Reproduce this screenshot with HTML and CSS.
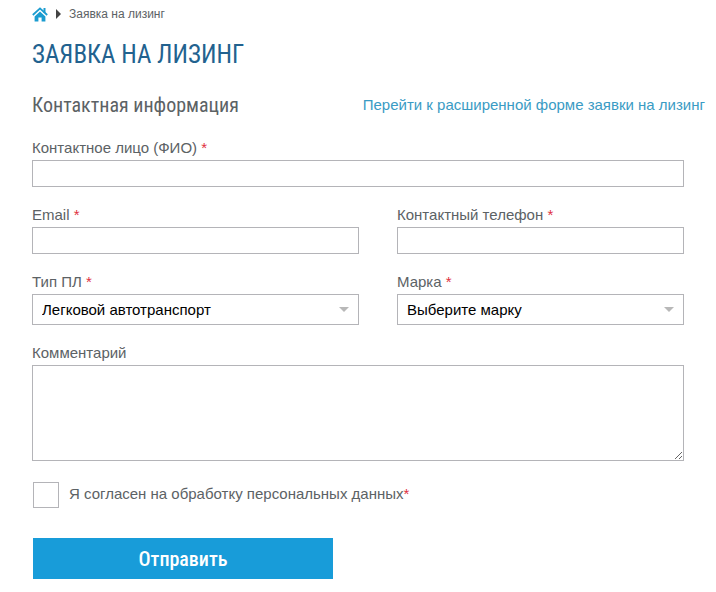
FILE: index.html
```html
<!DOCTYPE html>
<html lang="ru">
<head>
    <meta charset="UTF-8">
    <meta name="viewport" content="width=device-width, initial-scale=1.0">
    <title>Заявка на лизинг</title>
    <link rel="stylesheet" href="styles.css">
</head>
<body>
    <div class="container">
        <nav class="breadcrumbs">
            <a href="#" class="home" aria-label="Главная">
                <svg width="16" height="15" viewBox="0 0 16 15">
                    <path d="M11.5 1h2v5h-2z" fill="#1b9cd0"/>
                    <path d="M.8 8L8 1.4 15.2 8" fill="none" stroke="#1b9cd0" stroke-width="1.8"/>
                    <path d="M8 4.4l5.4 5V14.5H9.6v-4H6.4v4H2.6V9.4z" fill="#1b9cd0"/>
                </svg>
            </a>
            <svg class="separator" width="5" height="10" viewBox="0 0 5 10">
                <path d="M0 0l5 5-5 5z" fill="#444"/>
            </svg>
            <span>Заявка на лизинг</span>
        </nav>

        <h1>ЗАЯВКА НА ЛИЗИНГ</h1>

        <div class="form-header">
            <h2>Контактная информация</h2>
            <a href="#">Перейти к расширенной форме заявки на лизинг</a>
        </div>

        <form class="form">
            <div class="form-group">
                <label for="fio">Контактное лицо (ФИО) <span class="required">*</span></label>
                <input type="text" id="fio">
            </div>

            <div class="form-row">
                <div class="form-group">
                    <label for="email">Email <span class="required">*</span></label>
                    <input type="text" id="email">
                </div>
                <div class="form-group">
                    <label for="phone">Контактный телефон <span class="required">*</span></label>
                    <input type="text" id="phone">
                </div>
            </div>

            <div class="form-row">
                <div class="form-group">
                    <label for="type">Тип ПЛ <span class="required">*</span></label>
                    <div class="select">
                        <select id="type">
                            <option>Легковой автотранспорт</option>
                        </select>
                    </div>
                </div>
                <div class="form-group">
                    <label for="brand">Марка <span class="required">*</span></label>
                    <div class="select">
                        <select id="brand">
                            <option>Выберите марку</option>
                        </select>
                    </div>
                </div>
            </div>

            <div class="form-group">
                <label for="comment">Комментарий</label>
                <textarea id="comment"></textarea>
            </div>

            <div class="agree">
                <input type="checkbox" id="agree">
                <label for="agree">Я согласен на обработку персональных данных<span class="required">*</span></label>
            </div>

            <button type="submit">Отправить</button>
        </form>
    </div>
</body>
</html>
```
FILE: styles.css
```css
* {
    margin: 0;
    padding: 0;
    box-sizing: border-box;
}

body {
    background-color: #fff;
    color: #5c6265;
    font-family: "Liberation Sans", Arial, sans-serif;
    font-size: 15px;
    line-height: 20px;
}

a {
    color: #3a9bc4;
    text-decoration: none;
}

.container {
    padding: 4px 11px 12px 32px;
}

/* Хлебные крошки */
.breadcrumbs {
    display: flex;
    align-items: center;
    font-size: 12px;
}

.home,
.separator {
    display: block;
    margin-right: 8px;
}

.home svg {
    display: block;
}

/* Заголовки */
h1,
h2,
button {
    font-family: "Roboto Condensed", "Liberation Sans Narrow", "Arial Narrow", "Liberation Sans", sans-serif;
    font-weight: normal;
}

h1 {
    margin-top: 14px;
    color: #22628f;
    font-size: 25px;
    line-height: 34px;
}

.form-header {
    display: flex;
    justify-content: space-between;
    align-items: center;
    margin: 20px 0;
}

h2 {
    font-size: 20px;
    line-height: 26px;
}

/* Форма */
.form {
    margin-right: 21px;
}

.form-group {
    margin-bottom: 18px;
}

.form-group label {
    display: block;
    margin-bottom: 2px;
}

.form-row {
    display: grid;
    grid-template-columns: 327fr 287fr;
    gap: 38px;
}

.required {
    color: #e03040;
}

input,
select,
textarea {
    display: block;
    width: 100%;
    border: 1px solid #b4b4b8;
    border-radius: 0;
    background-color: #fff;
    color: #000;
    font: inherit;
}

input[type="text"] {
    height: 27px;
    padding: 0 9px;
}

.select {
    position: relative;
}

.select::after {
    content: "";
    position: absolute;
    top: 13px;
    right: 10px;
    border: 5px solid transparent;
    border-top-color: #b8b8b8;
    border-bottom: 0;
    pointer-events: none;
}

select {
    height: 31px;
    padding: 0 9px;
    appearance: none;
}

textarea {
    height: 96px;
    padding: 6px 9px;
    resize: vertical;
}

.agree {
    display: flex;
    gap: 10px;
    margin: 21px 0 30px 1px;
}

.agree input {
    width: 26px;
    height: 26px;
    appearance: none;
}

.agree input:checked {
    background-color: #189cd9;
}

.agree label {
    padding-top: 2px;
}

button {
    display: block;
    width: 300px;
    height: 41px;
    margin-left: 1px;
    border: 0;
    background-color: #189cd9;
    color: #fff;
    font-size: 20px;
    font-weight: 500;
    cursor: pointer;
}
```
